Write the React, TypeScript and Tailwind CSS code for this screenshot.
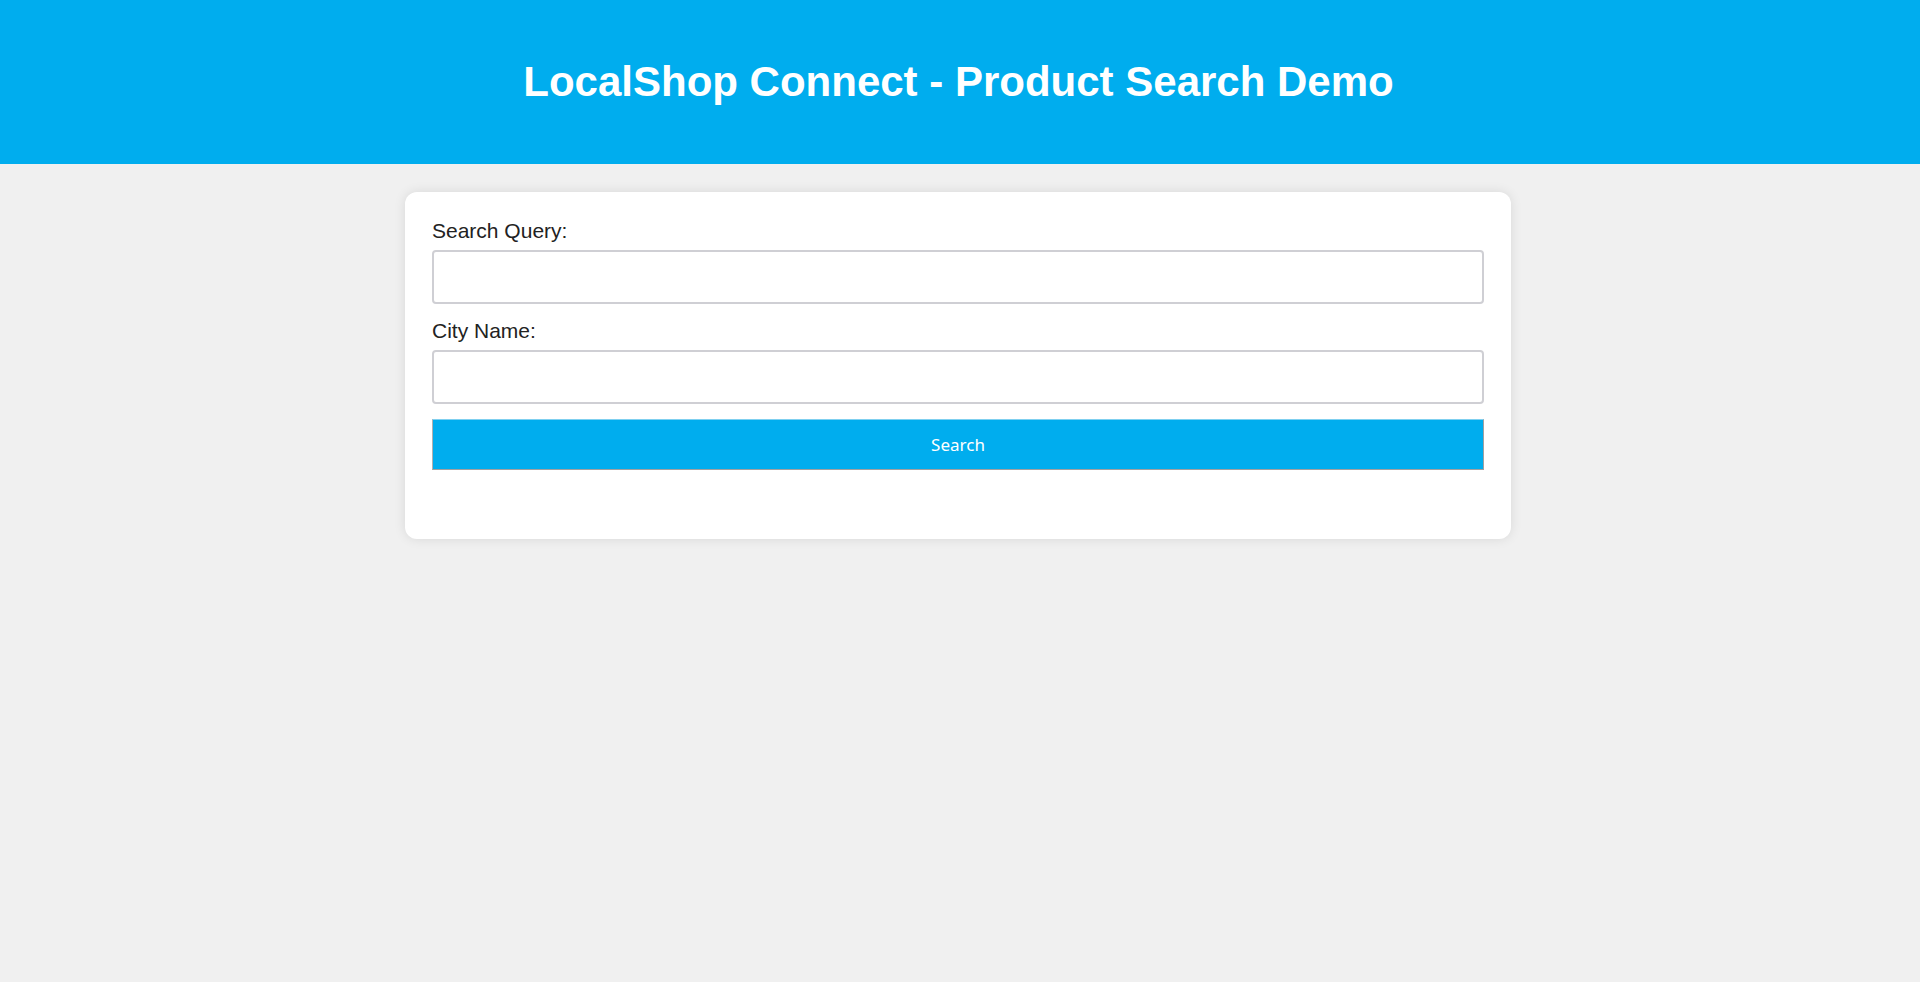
import React from "react";

export default function App() {
  return (
    <div className="min-h-[982px] w-full bg-[#f0f0f0]" style={{ fontFamily: '"Liberation Sans", Arial, sans-serif' }}>
      <header className="flex h-[164px] w-full items-center justify-center bg-[#00adee] pr-[3px]">
        <h1 className="text-[42px] font-bold leading-none text-white">LocalShop Connect - Product Search Demo</h1>
      </header>
      <div className="flex justify-center pr-[4px] pt-[28px]">
        <div className="w-[1106px] rounded-[12px] bg-white px-[27px] pt-[27px] pb-[69px] shadow-[0_0_12px_rgba(0,0,0,0.1)]">
          <label className="block text-[21px] leading-[24px] text-[#222]">Search Query:</label>
          <input
            type="text"
            className="mt-[7px] block h-[54px] w-full rounded-[4px] border-2 border-[#cfcfd4] bg-white px-3 text-[20px] outline-none"
          />
          <label className="mt-[15px] block text-[21px] leading-[24px] text-[#222]">City Name:</label>
          <input
            type="text"
            className="mt-[7px] block h-[54px] w-full rounded-[4px] border-2 border-[#cfcfd4] bg-white px-3 text-[20px] outline-none"
          />
          <button
            type="button"
            className="mt-[15px] flex h-[51px] w-full items-center justify-center border-[1.5px] border-[#a0a0a0] border-t-[#7fd0f0] border-l-[#b0b0b0] bg-[#00adee] text-[17px] text-white"
            style={{ fontFamily: '"Noto Sans", "Open Sans", sans-serif' }}
          >
            Search
          </button>
        </div>
      </div>
    </div>
  );
}
